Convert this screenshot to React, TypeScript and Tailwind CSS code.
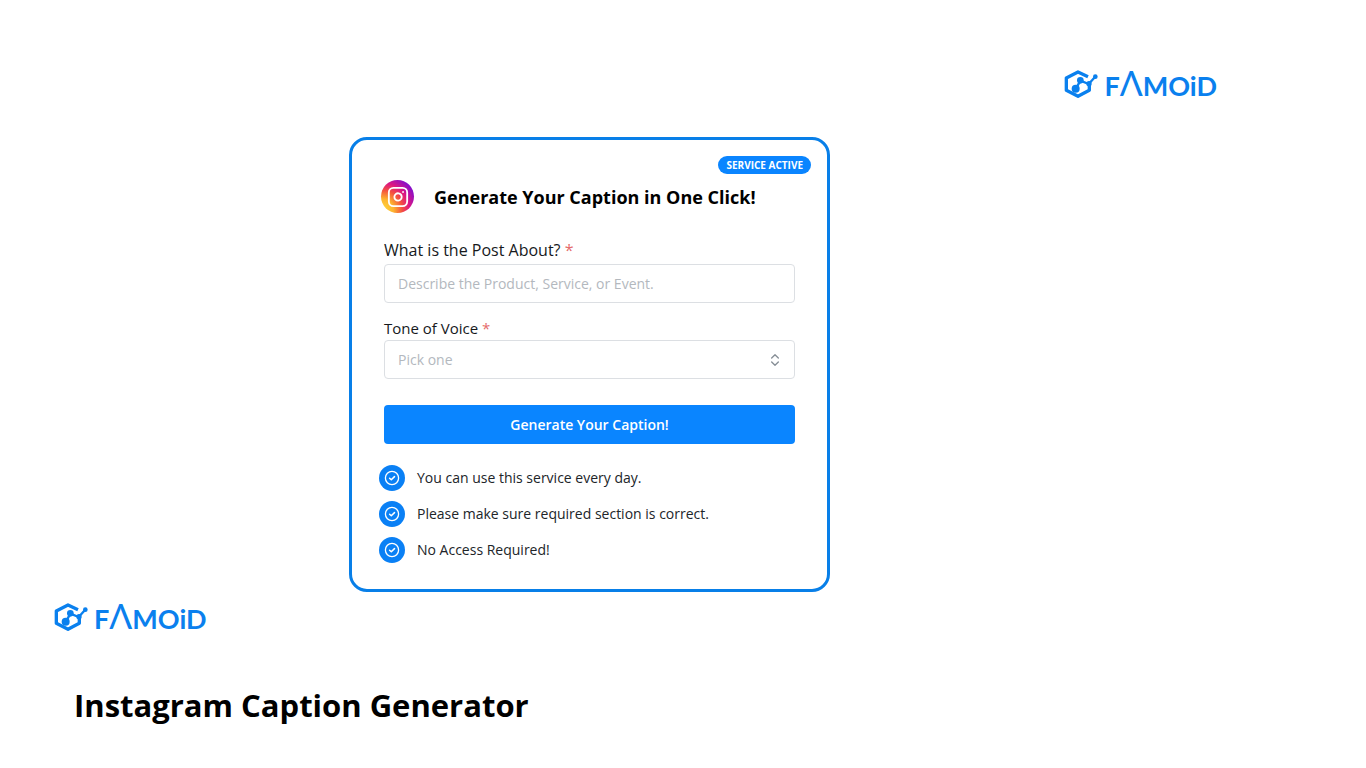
import { useState } from "react";
import { ChevronsUpDown, Instagram } from "lucide-react";

const tones = ["Friendly", "Professional", "Funny", "Inspirational"];

const notes = [
  "You can use this service every day.",
  "Please make sure required section is correct.",
  "No Access Required!",
];

// Brand mark with the wordmark next to it
function Logo() {
  return (
    <a
      href="#"
      aria-label="Famoid"
      className="flex h-8 items-center gap-1.5 text-[#0a80ee]"
    >
      <svg
        viewBox="40 30 102 84"
        className="h-7 w-[34px] shrink-0"
        fill="none"
        stroke="currentColor"
        aria-hidden="true"
      >
        <path
          d="M112 50 82 36 47 54V91L82 109 116 91V74"
          strokeWidth="10"
          strokeLinejoin="round"
        />
        <path d="M76 86 89 62 114 72 133 51" strokeWidth="7" strokeLinejoin="round" />
        <g fill="currentColor" stroke="none">
          <circle cx="75" cy="86" r="12" />
          <circle cx="89" cy="61" r="10" />
          <circle cx="115" cy="71" r="8" />
          <circle cx="134" cy="50" r="7" />
        </g>
      </svg>
      <span className="font-[Lato,sans-serif] text-[27px] leading-8 font-bold whitespace-nowrap">
        F<span className="text-[34px] leading-8 font-normal">Λ</span>MOiD
      </span>
    </a>
  );
}

function CheckIcon() {
  return (
    <svg
      viewBox="0 0 16 16"
      className="size-4 text-white"
      fill="none"
      stroke="currentColor"
      strokeLinecap="round"
      strokeLinejoin="round"
      aria-hidden="true"
    >
      <circle cx="8" cy="8" r="6.6" strokeWidth="1.3" />
      <path d="m5.6 8.2 1.7 1.6 3.2-3.2" strokeWidth="1.5" />
    </svg>
  );
}

function CaptionForm() {
  const [topic, setTopic] = useState("");
  const [tone, setTone] = useState("");

  return (
    <form className="px-4" onSubmit={(e) => e.preventDefault()}>
      <label htmlFor="topic" className="block text-[16px] leading-6 font-medium text-[#16191c]">
        What is the Post About? <span className="text-[#e56b6b]">*</span>
      </label>
      <input
        id="topic"
        type="text"
        value={topic}
        onChange={(e) => setTopic(e.target.value)}
        placeholder="Describe the Product, Service, or Event."
        className="mt-0.5 block h-[39px] w-full rounded border border-[#dcdfe3] bg-white px-[13px] text-[14px] text-[#212529] placeholder:text-[#b3b8be]"
      />

      <label
        htmlFor="tone"
        className="mt-[13px] block text-[15px] leading-6 font-medium text-[#16191c]"
      >
        Tone of Voice <span className="text-[#e56b6b]">*</span>
      </label>
      <div className="relative">
        <select
          id="tone"
          value={tone}
          onChange={(e) => setTone(e.target.value)}
          className="block h-[39px] w-full appearance-none rounded border border-[#dcdfe3] bg-white px-[13px] text-[14px] text-[#b3b8be]"
        >
          <option value="">Pick one</option>
          {tones.map((item) => (
            <option key={item}>{item}</option>
          ))}
        </select>
        <ChevronsUpDown
          className="pointer-events-none absolute top-3 right-3 size-4 text-[#868e96]"
          strokeWidth={2}
        />
      </div>

      <button
        type="submit"
        className="mt-[26px] block h-[39px] w-full rounded bg-[#0a85ff] text-[14px] font-semibold text-white"
      >
        Generate Your Caption!
      </button>
    </form>
  );
}

export default function App() {
  return (
    <div className="min-h-screen bg-white font-['Open_Sans','Noto_Sans',sans-serif] text-black">
      <header className="flex justify-end pt-[68px] pr-[149px]">
        <Logo />
      </header>

      <main className="mt-[37px] grid grid-cols-[349fr_481fr_536fr]">
        <section className="col-start-2 rounded-[18px] border-3 border-[#087fe8] bg-white px-4 pt-4 pb-[26px]">
          <div className="flex justify-end">
            <span className="rounded-full bg-[#0a85ff] px-2 text-[10px] leading-[18px] font-bold text-white">
              SERVICE ACTIVE
            </span>
          </div>

          <div className="mt-1.5 mb-[25px] flex items-center gap-5 px-[13px]">
            <span className="flex size-[33px] shrink-0 items-center justify-center rounded-full bg-[radial-gradient(circle_at_5%_90%,#ffd93b_0%,#fdb32f_25%,#f4513f_45%,#dc1683_62%,#8a0fc8_82%,#6a10d0_100%)]">
              <Instagram className="size-[22px] text-white" strokeWidth={2} />
            </span>
            <h2 className="text-lg leading-7 font-bold">Generate Your Caption in One Click!</h2>
          </div>

          <CaptionForm />

          <ul className="mt-[21px] flex flex-col gap-2.5 px-[11px]">
            {notes.map((note) => (
              <li key={note} className="flex items-center gap-3">
                <span className="flex size-[26px] shrink-0 items-center justify-center rounded-full bg-[#0a80f5]">
                  <CheckIcon />
                </span>
                <span className="text-[14px] leading-6 text-[#212529]">{note}</span>
              </li>
            ))}
          </ul>
        </section>
      </main>

      <footer className="mt-[9px] flex flex-col items-start pb-8 pl-[54px]">
        <Logo />
        <h1 className="mt-[52px] pl-5 text-[31px] leading-10 font-bold">
          Instagram Caption Generator
        </h1>
      </footer>
    </div>
  );
}
